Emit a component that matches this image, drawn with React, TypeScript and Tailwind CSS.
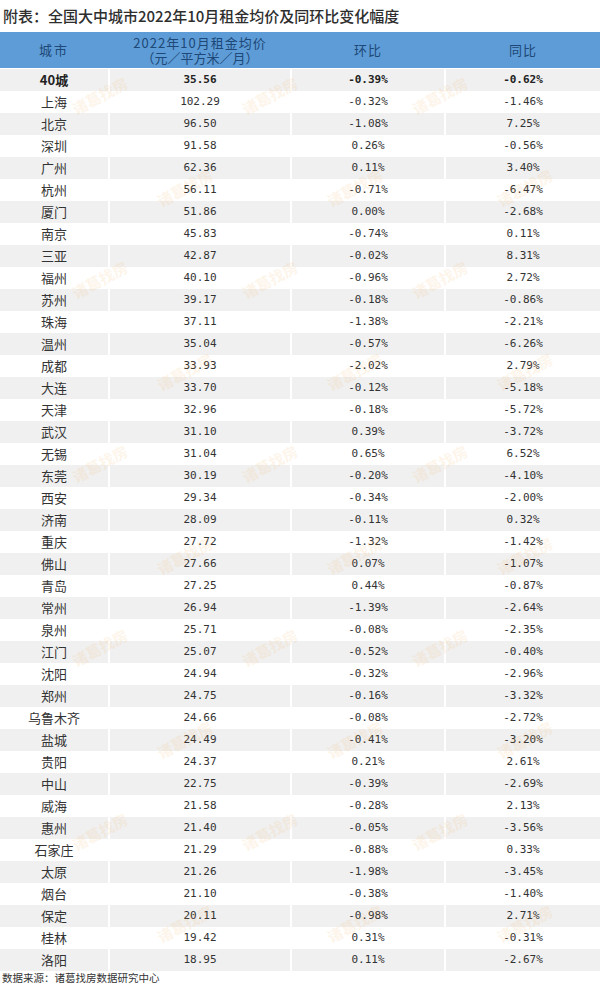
const rows: [string, string, string, string][] = [
  ["40城", "35.56", "-0.39%", "-0.62%"],
  ["上海", "102.29", "-0.32%", "-1.46%"],
  ["北京", "96.50", "-1.08%", "7.25%"],
  ["深圳", "91.58", "0.26%", "-0.56%"],
  ["广州", "62.36", "0.11%", "3.40%"],
  ["杭州", "56.11", "-0.71%", "-6.47%"],
  ["厦门", "51.86", "0.00%", "-2.68%"],
  ["南京", "45.83", "-0.74%", "0.11%"],
  ["三亚", "42.87", "-0.02%", "8.31%"],
  ["福州", "40.10", "-0.96%", "2.72%"],
  ["苏州", "39.17", "-0.18%", "-0.86%"],
  ["珠海", "37.11", "-1.38%", "-2.21%"],
  ["温州", "35.04", "-0.57%", "-6.26%"],
  ["成都", "33.93", "-2.02%", "2.79%"],
  ["大连", "33.70", "-0.12%", "-5.18%"],
  ["天津", "32.96", "-0.18%", "-5.72%"],
  ["武汉", "31.10", "0.39%", "-3.72%"],
  ["无锡", "31.04", "0.65%", "6.52%"],
  ["东莞", "30.19", "-0.20%", "-4.10%"],
  ["西安", "29.34", "-0.34%", "-2.00%"],
  ["济南", "28.09", "-0.11%", "0.32%"],
  ["重庆", "27.72", "-1.32%", "-1.42%"],
  ["佛山", "27.66", "0.07%", "-1.07%"],
  ["青岛", "27.25", "0.44%", "-0.87%"],
  ["常州", "26.94", "-1.39%", "-2.64%"],
  ["泉州", "25.71", "-0.08%", "-2.35%"],
  ["江门", "25.07", "-0.52%", "-0.40%"],
  ["沈阳", "24.94", "-0.32%", "-2.96%"],
  ["郑州", "24.75", "-0.16%", "-3.32%"],
  ["乌鲁木齐", "24.66", "-0.08%", "-2.72%"],
  ["盐城", "24.49", "-0.41%", "-3.20%"],
  ["贵阳", "24.37", "0.21%", "2.61%"],
  ["中山", "22.75", "-0.39%", "-2.69%"],
  ["威海", "21.58", "-0.28%", "2.13%"],
  ["惠州", "21.40", "-0.05%", "-3.56%"],
  ["石家庄", "21.29", "-0.88%", "0.33%"],
  ["太原", "21.26", "-1.98%", "-3.45%"],
  ["烟台", "21.10", "-0.38%", "-1.40%"],
  ["保定", "20.11", "-0.98%", "2.71%"],
  ["桂林", "19.42", "0.31%", "-0.31%"],
  ["洛阳", "18.95", "0.11%", "-2.67%"],
];

// faint diagonal watermark spots over the table
const marks: [number, number][] = [];
for (let r = 0; r < 10; r++) {
  const y = 85 + r * 92;
  const xs = r % 2 === 0 ? [70, 240, 410] : [155, 325, 495];
  xs.forEach((x) => marks.push([x, y]));
}

const cjk = "font-['Noto_Sans_CJK_SC','Noto_Sans',sans-serif]";
const mono = "font-['DejaVu_Sans_Mono','Liberation_Mono',monospace]";

export default function App() {
  return (
    <div className="relative h-[984px] w-[600px] overflow-hidden bg-white text-[#333333]">
      <div className={`flex h-[32px] items-center pl-[3px] text-[15px] font-medium text-[#2e2e2e] ${cjk}`}>
        附表：全国大中城市2022年10月租金均价及同环比变化幅度
      </div>

      <div className="grid h-[37px] grid-cols-[108px_180px_152px_154px] gap-x-[2px] border-b border-white bg-[#5d9cd6] text-[13px] text-[#1e4877]">
        <div className={`flex items-center justify-center tracking-[2px] ${cjk}`}>城市</div>
        <div className={`flex flex-col items-center justify-center leading-[15px] ${cjk}`}>
          <span className="tracking-[1px]">2022年10月租金均价</span>
          <span>（元／平方米／月）</span>
        </div>
        <div className={`flex items-center justify-center tracking-[1px] ${cjk}`}>环比</div>
        <div className={`flex items-center justify-center tracking-[1px] ${cjk}`}>同比</div>
      </div>

      <div className="flex flex-col">
        {rows.map(([city, price, mom, yoy], i) => {
          const bg = i % 2 === 0 ? "bg-[#f0f0f0]" : "bg-white";
          const bold = i === 0 ? "font-bold text-[#222222]" : "";
          return (
            <div key={city} className="grid h-[22px] grid-cols-[108px_180px_152px_154px] gap-x-[2px]">
              <div className={`flex items-center justify-center text-[13px] ${cjk} ${bg} ${bold}`}>{city}</div>
              <div className={`flex items-center justify-center text-[11px] ${mono} ${bg} ${bold}`}>{price}</div>
              <div className={`flex items-center justify-center text-[11px] ${mono} ${bg} ${bold}`}>{mom}</div>
              <div className={`flex items-center justify-center text-[11px] ${mono} ${bg} ${bold}`}>{yoy}</div>
            </div>
          );
        })}
      </div>

      <div className={`flex h-[13px] items-center pl-[2px] text-[10.5px] leading-[13px] text-[#333333] ${cjk}`}>
        数据来源：诸葛找房数据研究中心
      </div>

      {marks.map(([x, y], i) => (
        <span
          key={i}
          aria-hidden="true"
          className={`pointer-events-none absolute -rotate-[28deg] select-none text-[15px] font-bold text-[#f2a040] opacity-[0.1] ${cjk}`}
          style={{ left: x, top: y }}
        >
          诸葛找房
        </span>
      ))}
    </div>
  );
}
